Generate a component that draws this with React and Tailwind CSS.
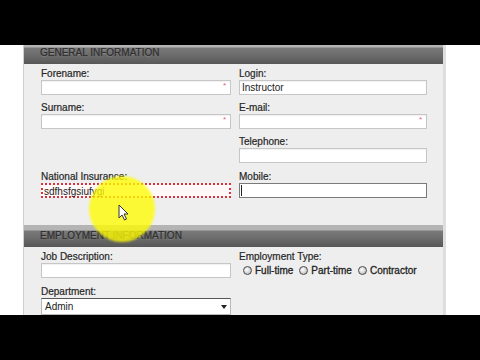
import React from 'react';

const font = "font-['Liberation_Sans',Arial,sans-serif]";

const SectionHeader = ({ title }) => (
  <div className="h-[22px] shrink-0 pl-[16px] bg-[linear-gradient(#b4b4b4,#b4b4b4_5px,#7a7a7a_6px,#686868_15px,#575757)] text-[10px] leading-[22px] uppercase text-[#2e2e2e] [-webkit-text-stroke:0.25px_#2e2e2e] [text-shadow:0_1px_0_rgba(255,255,255,0.2)]">
    {title}
  </div>
);

const Field = ({ label, children }) => (
  <div className="flex flex-col">
    <div className="h-[13px] text-[10px] leading-[13px] text-[#262626] [-webkit-text-stroke:0.2px_#262626]">{label}</div>
    {children}
  </div>
);

const TextInput = ({ value, required, variant }) => {
  const box =
    variant === 'error'
      ? 'border-2 border-dotted border-[#d8303c] bg-[#fff8f8] px-[1px]'
      : variant === 'focus'
      ? 'border border-[#7a7a7a] bg-white px-[2px]'
      : 'border border-[#c6c6c6] bg-white px-[2px] shadow-[inset_0_1px_1px_rgba(0,0,0,0.06)]';
  return (
    <div className={`relative h-[15px] text-[10px] leading-[13px] text-[#222] ${box}`}>
      {value}
      {required && (
        <span className="absolute right-[4px] top-[1px] text-[8px] leading-[8px] text-[#e0607a]">*</span>
      )}
      {variant === 'focus' && <span className="absolute left-[1px] top-[1px] w-px h-[11px] bg-[#222]" />}
    </div>
  );
};

const Radio = ({ label }) => (
  <div className="flex items-center gap-[3px]">
    <span className="w-[9px] h-[9px] rounded-full border border-[#4a4a4a] bg-[radial-gradient(circle_at_40%_40%,#ffffff,#cfcfcf_60%,#9a9a9a)]" />
    <span className="text-[10px] leading-[13px] text-[#1e1e1e] [-webkit-text-stroke:0.3px_#1e1e1e]">{label}</span>
  </div>
);

export default function App() {
  return (
    <div className={`w-[480px] h-[360px] bg-black flex flex-col ${font}`}>
      <div className="h-[45px] shrink-0" />
      <div className="relative h-[270px] shrink-0 overflow-hidden bg-white flex">
        <div className="w-[23px] shrink-0" />
        <div className="w-[423px] shrink-0 -mt-[3px] bg-[#eeeeee] border-l border-[#cfcfcf] border-r-[3px] border-r-[#dedede] flex flex-col">
          <SectionHeader title="General Information" />
          <div className="grid grid-cols-[190px_188px] gap-x-[8px] gap-y-[6px] pl-[17px] pt-[3px] pb-[27px]">
            <Field label="Forename:">
              <TextInput required />
            </Field>
            <Field label="Login:">
              <TextInput value="Instructor" />
            </Field>
            <Field label="Surname:">
              <TextInput required />
            </Field>
            <Field label="E-mail:">
              <TextInput required />
            </Field>
            <div />
            <Field label="Telephone:">
              <TextInput />
            </Field>
            <div className="mt-[1px]">
              <Field label="National Insurance:">
                <TextInput value="sdfhsfgsiufygi" variant="error" />
              </Field>
            </div>
            <div className="mt-[1px]">
              <Field label="Mobile:">
                <TextInput variant="focus" />
              </Field>
            </div>
          </div>
          <SectionHeader title="Employment Information" />
          <div className="grid grid-cols-[190px_188px] gap-x-[8px] gap-y-[7px] pl-[17px] pt-[3px] pb-[20px]">
            <Field label="Job Description:">
              <TextInput />
            </Field>
            <Field label="Employment Type:">
              <div className="h-[15px] flex items-center gap-[6px] pl-[4px]">
                <Radio label="Full-time" />
                <Radio label="Part-time" />
                <Radio label="Contractor" />
              </div>
            </Field>
            <Field label="Department:">
              <div className="relative h-[17px] border border-[#b8b8b8] border-t-[#555] bg-white pl-[3px] text-[10px] leading-[15px] text-[#222]">
                Admin
                <svg className="absolute right-[3px] top-[6px]" width="6" height="4" viewBox="0 0 6 4">
                  <path d="M0 0h6L3 4z" fill="#222" />
                </svg>
              </div>
            </Field>
            <div />
          </div>
        </div>
        <div className="flex-1" />

        {/* cursor highlight */}
        <div className="absolute left-[89px] top-[131px] w-[66px] h-[66px] rounded-full bg-[rgba(255,252,0,0.78)] blur-[1px]" />
        <svg className="absolute left-[118px] top-[159px]" width="12" height="17" viewBox="0 0 12 17">
          <path d="M1 1v13l3-3 2.5 5 2-1-2.5-5H10z" fill="#fff" stroke="#333" strokeWidth="1" strokeLinejoin="round" />
        </svg>
      </div>
      <div className="h-[45px] shrink-0" />
    </div>
  );
}
